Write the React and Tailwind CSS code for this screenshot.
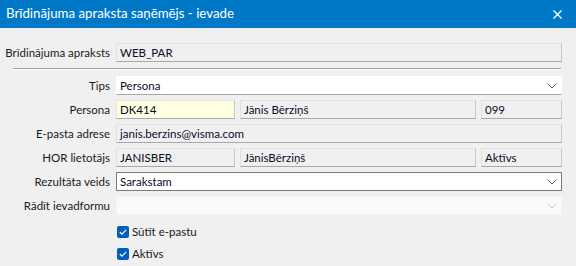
import React from "react";

const font = { fontFamily: 'Lato, "Noto Sans", sans-serif' };

function Chevron({ light }) {
  return (
    <svg width="10" height="6" viewBox="0 0 10 6" className="shrink-0">
      <path d="M0.5 0.5 L5 5 L9.5 0.5" fill="none" stroke={light ? "#c8c8c8" : "#606060"} strokeWidth="1" />
    </svg>
  );
}

function Field({ children, className = "", chevron, lightChevron }) {
  return (
    <div className={`h-[19px] flex items-center pl-[3px] pr-[4px] text-[11.5px] leading-none text-[#0a0a2a] ${className}`}>
      <span className="flex-1 whitespace-nowrap">{children}</span>
      {chevron && <Chevron light={lightChevron} />}
    </div>
  );
}

const ro = "bg-[#f0f0f0] border border-[#e2e2e2] border-b-[#a8a8a8] border-r-[#c8c8c8]";

function Row({ label, children }) {
  return (
    <div className="flex items-center h-[19px]">
      <div className="w-[110px] flex justify-end text-[11.5px] leading-none text-[#1a1a1a] shrink-0 whitespace-nowrap">{label}</div>
      <div className="ml-[6px] w-[446px] flex gap-[5px]">{children}</div>
    </div>
  );
}

function Check({ label }) {
  return (
    <div className="flex items-center h-[20px] pl-[117px]">
      <div className="w-[12px] h-[12px] rounded-[2px] bg-[#005fb8] flex items-center justify-center">
        <svg width="8" height="6" viewBox="0 0 8 6">
          <path d="M0.8 3 L3 5.2 L7.2 0.8" fill="none" stroke="white" strokeWidth="1.1" />
        </svg>
      </div>
      <span className="ml-[3px] text-[11.5px] leading-none text-[#1a1a1a]">{label}</span>
    </div>
  );
}

export default function App() {
  return (
    <div className="w-[576px] h-[266px] bg-[#f0f0f0] flex flex-col overflow-hidden" style={font}>
      <div className="h-[28px] bg-[#0078c8] flex items-center justify-between pl-[6px] pr-[14px] shrink-0">
        <span className="text-white text-[13.25px] leading-none">Brīdinājuma apraksta saņēmējs - ievade</span>
        <svg width="9" height="9" viewBox="0 0 9 9">
          <path d="M0.5 0.5 L8.5 8.5 M8.5 0.5 L0.5 8.5" stroke="white" strokeWidth="1.3" />
        </svg>
      </div>
      <div className="flex flex-col pt-[15px]">
        <Row label="Brīdinājuma apraksts">
          <Field className={`flex-1 ${ro}`}>WEB_PAR</Field>
        </Row>
        <div className="ml-[13px] w-[548px] mt-[6px] border-t border-[#a0a0a0] border-b border-b-white" />
        <div className="flex flex-col gap-[5px] mt-[6px]">
          <Row label="Tips">
            <Field className="flex-1 bg-white border border-white border-b-[#a8a8a8]" chevron>Persona</Field>
          </Row>
          <Row label="Persona">
            <Field className="w-[119px] bg-[#ffffe1] border border-[#e2e2e2] border-b-[#a8a8a8] border-r-[#c8c8c8]">DK414</Field>
            <Field className={`w-[236px] ${ro}`}>Jānis Bērziņš</Field>
            <Field className={`flex-1 ${ro}`}>099</Field>
          </Row>
          <Row label="E-pasta adrese">
            <Field className={`flex-1 ${ro}`}>janis.berzins@visma.com</Field>
          </Row>
          <Row label="HOR lietotājs">
            <Field className={`w-[119px] ${ro}`}>JANISBER</Field>
            <Field className={`w-[236px] ${ro}`}>JānisBērziņš</Field>
            <Field className={`flex-1 ${ro}`}>Aktīvs</Field>
          </Row>
          <Row label="Rezultāta veids">
            <Field className="flex-1 bg-white border border-[#7a7a7a]" chevron>Sarakstam</Field>
          </Row>
          <Row label="Rādīt ievadformu">
            <Field className="flex-1 bg-[#fafafa] border border-[#f4f4f4]" chevron lightChevron></Field>
          </Row>
        </div>
        <div className="mt-[7px] flex flex-col gap-[2px]">
          <Check label="Sūtīt e-pastu" />
          <Check label="Aktīvs" />
        </div>
      </div>
    </div>
  );
}
